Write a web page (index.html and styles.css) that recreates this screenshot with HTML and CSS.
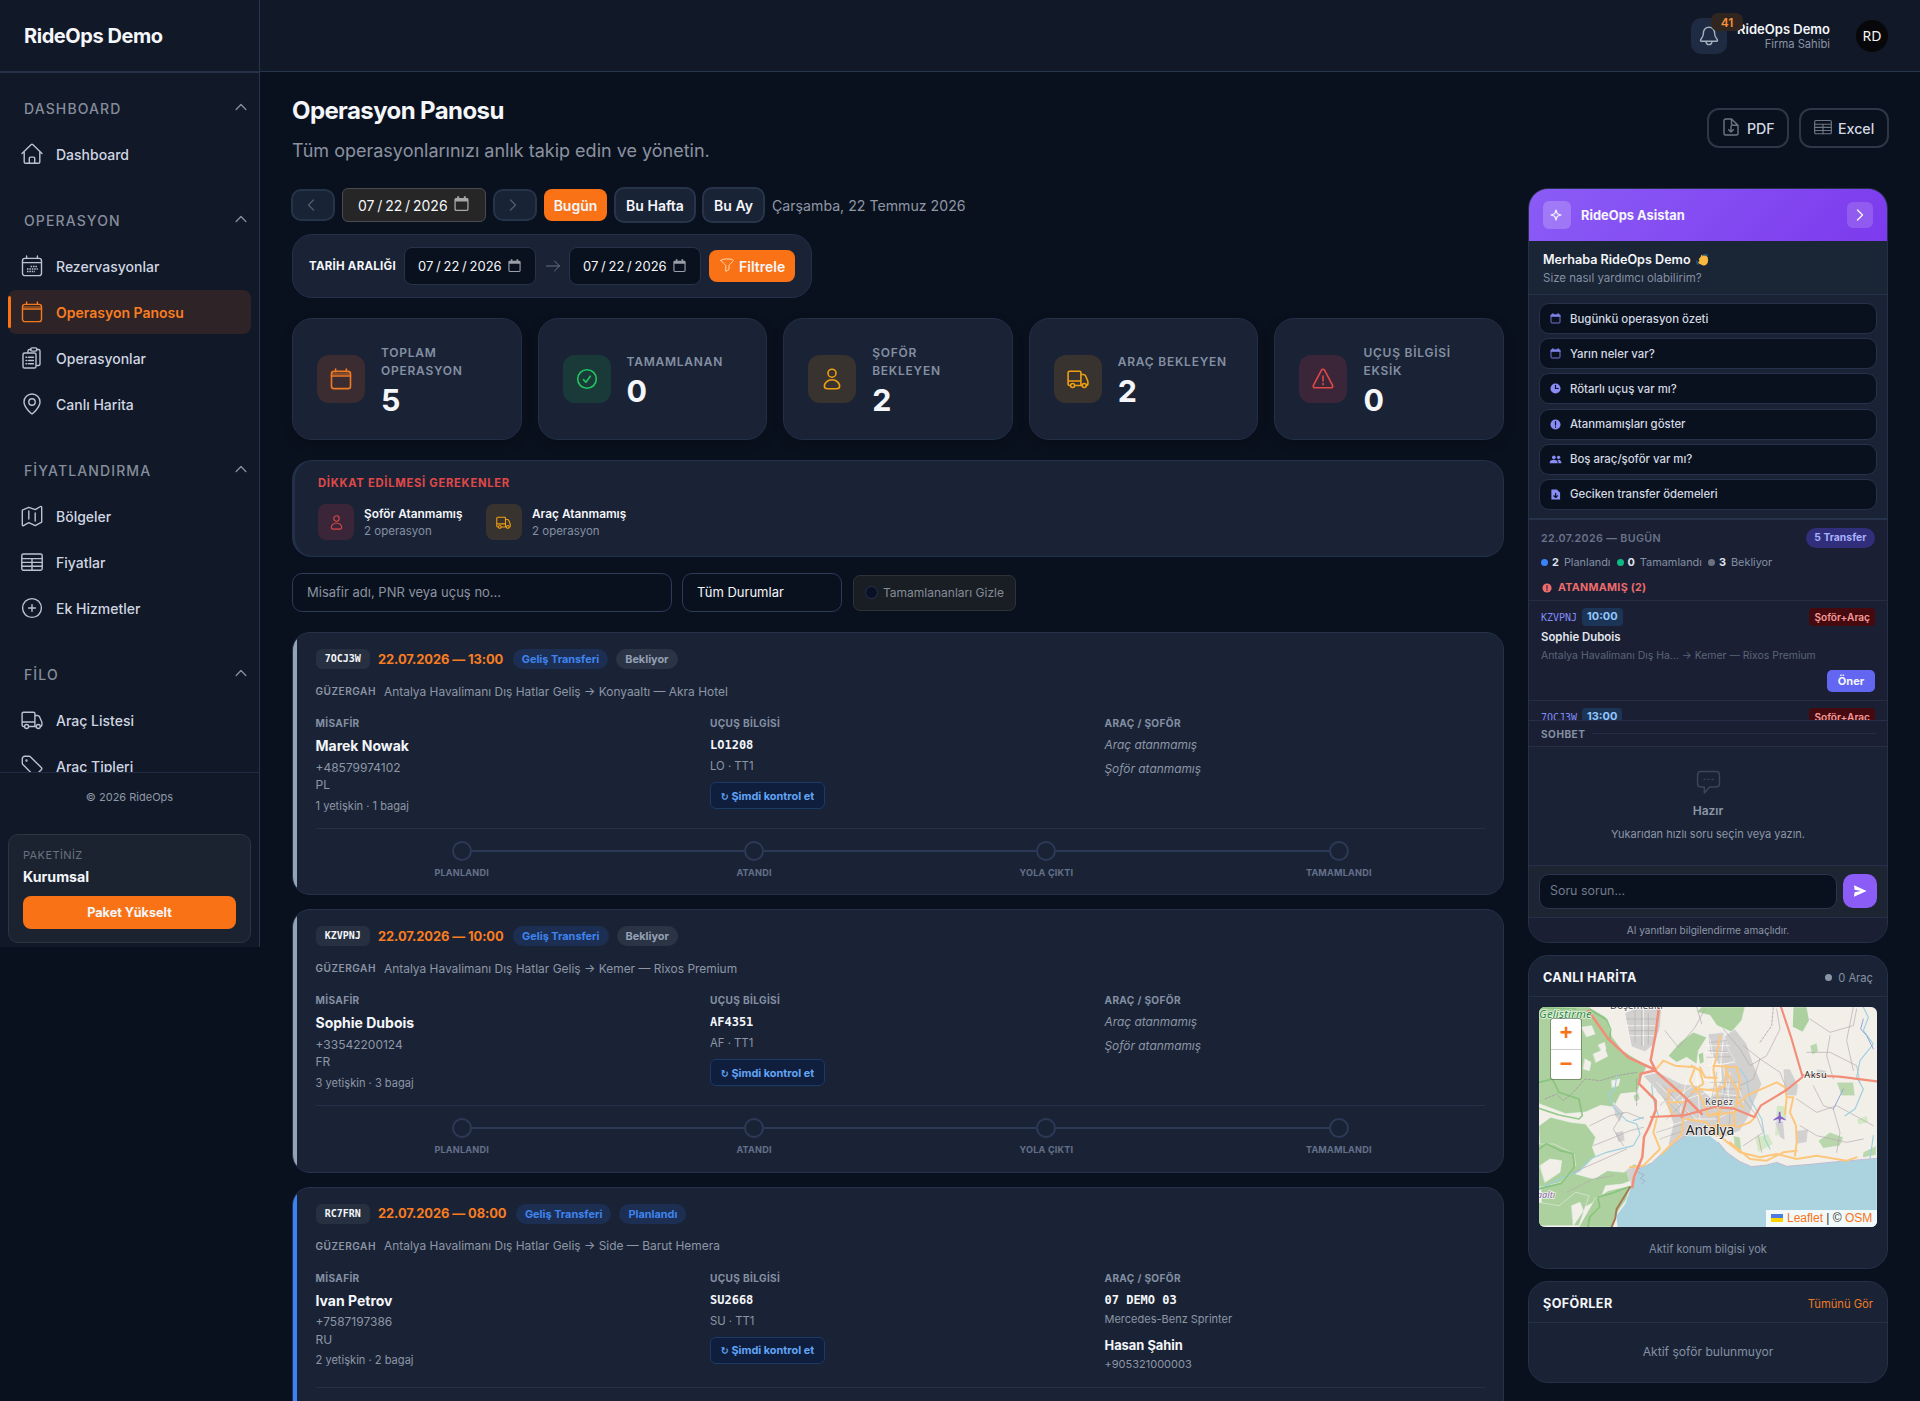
FILE: index.html
```html
<!DOCTYPE html>
<html lang="tr">
<head>
<meta charset="utf-8">
<title>RideOps Demo — Operasyon Panosu</title>
<link rel="stylesheet" href="styles.css">
</head>
<body>
<svg class="sprite" aria-hidden="true">
  <symbol id="i-home" viewBox="0 0 22 22"><path d="M1 10.5 10.3 1.6a1 1 0 0 1 1.4 0L21 10.5M3.2 8.5V19a1.3 1.3 0 0 0 1.3 1.3h13a1.3 1.3 0 0 0 1.3-1.3V8.5M8.3 20.3v-5.2a1 1 0 0 1 1-1h3.4a1 1 0 0 1 1 1v5.2"/></symbol>
  <symbol id="i-cal" viewBox="0 0 22 22"><rect x="1.5" y="3.400" width="19" height="17.200" rx="2.400"/><path d="M1.500 8h19M5.600 1v2.600M16.400 1v2.600"/><path d="M2 6h18" stroke-opacity=".55"/></symbol>
  <symbol id="i-caldots" viewBox="0 0 22 22"><rect x="1.5" y="3.4" width="19" height="17.200" rx="2.4"/><path d="M1.5 7.600h19M5.6 1v2.6M16.4 1v2.6"/><path d="M9.6 11.400h7.200M6 14h10.800M6 16.600h8" stroke-linecap="butt" stroke-width="1.500" stroke-dasharray="1.500 .9"/></symbol>
  <symbol id="i-clip" viewBox="0 0 22 22"><rect x="2" y="6" width="13" height="15" rx="1.6"/><path d="M7 5.500V4a1.500 1.500 0 0 1 1.500-1.500H10M15.500 2.500h2A1.500 1.500 0 0 1 19 4v13a1.500 1.500 0 0 1-1.500 1.500H15.500"/><rect x="9.600" y=".9" width="6.300" height="3.200" rx="1.400"/><path d="M5 10.200h.8M7.600 10.200h4.800M5 13.500h.8M7.600 13.500h4.800M5 16.800h.8M7.600 16.800h4.800"/></symbol>
  <symbol id="i-pin" viewBox="0 0 22 22"><path d="M11 21S3 14.800 3 9a8 8 0 0 1 16 0c0 5.800-8 12-8 12Z"/><circle cx="11" cy="9" r="3.200"/></symbol>
  <symbol id="i-map" viewBox="0 0 22 22"><path d="M7.800 2.300 14.200 4.600 19.500 1.500a.8.8 0 0 1 1.200.7V17.200L14.200 20.600 7.800 17.700 2.500 20.600a.8.8 0 0 1-1.200-.7V5.200L7.800 2.300ZM7.800 6v8M14.200 8v8"/></symbol>
  <symbol id="i-table" viewBox="0 0 22 22"><rect x=".8" y="3" width="20.400" height="16.200" rx="1.600"/><path d="M.8 7.600h20.400M.8 11.400h20.400M.8 15.300h20.400M11 7.600v11.600"/></symbol>
  <symbol id="i-plus" viewBox="0 0 22 22"><circle cx="11" cy="11" r="9.400"/><path d="M11 7.600v6.800M7.600 11h6.800"/></symbol>
  <symbol id="i-truck" viewBox="0 0 22 22"><path d="M3.400 17.500H2.500A1.400 1.400 0 0 1 1.100 16V4.600A1.400 1.400 0 0 1 2.500 3.200h10a1.400 1.400 0 0 1 1.400 1.400v12.900H7.800M1.100 13h12.800M13.900 6.500h2.400c1 0 1.700.3 2.200 1.200l1.900 4.300c.3.700.5 1.400.5 2.100v2a1.400 1.400 0 0 1-1.400 1.400M13.900 17.500h1.200"/><circle cx="5.600" cy="17.500" r="2"/><circle cx="17.300" cy="17.500" r="2"/></symbol>
  <symbol id="i-tag" viewBox="0 0 22 22"><path d="M1.300 8.200V3.800A2.500 2.500 0 0 1 3.800 1.300h4.400a2 2 0 0 1 1.400.6L20.300 12.600a1.500 1.500 0 0 1 0 2.100l-5.600 5.600a1.500 1.500 0 0 1-2.100 0L1.900 9.600a2 2 0 0 1-.6-1.400Z"/><circle cx="5.500" cy="5.500" r=".5"/></symbol>
  <symbol id="i-user" viewBox="0 0 22 22"><circle cx="11" cy="5.200" r="4"/><path d="M11 11.800c-4.600 0-7.600 3.200-7.600 6.400 0 1.700 1.300 2.500 3 2.500h9.200c1.700 0 3-.8 3-2.500 0-3.200-3-6.400-7.600-6.400Z"/></symbol>
  <symbol id="i-check" viewBox="0 0 22 22"><circle cx="11" cy="11" r="9.300"/><path d="m7.500 11.600 2.400 2.600 4.400-6"/></symbol>
  <symbol id="i-warn" viewBox="0 0 22 22"><path d="M9.500 2.200 1.400 17.300a1.700 1.700 0 0 0 1.500 2.500h16.200a1.700 1.700 0 0 0 1.500-2.500L12.500 2.200a1.700 1.700 0 0 0-3 0ZM11 8v5M11 15.500v1.200"/></symbol>
  <symbol id="i-bell" viewBox="0 0 20 20"><path d="M10 1.200c-3.600 0-5.600 2.600-5.600 6 0 5-2.900 5.300-2.900 7.300 0 .5.400.8 1 .8h15c.6 0 1-.3 1-.8 0-2-2.900-2.300-2.900-7.300 0-3.400-2-6-5.600-6ZM7 15.600c.2 1.900 1.300 3 3 3s2.800-1.100 3-3"/></symbol>
  <symbol id="i-up" viewBox="0 0 12 12"><path d="M1.200 8.400 6 3.600l4.800 4.800"/></symbol>
  <symbol id="i-left" viewBox="0 0 12 12"><path d="M8.500 1 3.500 6l5 5"/></symbol>
  <symbol id="i-right" viewBox="0 0 12 12"><path d="m3.500 1 5 5-5 5"/></symbol>
  <symbol id="i-arrow" viewBox="0 0 14 14"><path d="M.5 7h13M8.500 2l5 5-5 5"/></symbol>
  <symbol id="i-funnel" viewBox="0 0 14 14"><path d="M.8 2.400C.8.400 13.200.4 13.200 2.400c0 1-4.200 4.300-4.200 5.200v3.800l-3.200 2V7.600c0-.9-5-4.200-5-5.200Z"/></symbol>
  <symbol id="i-pdf" viewBox="0 0 18 18"><path d="M9.500 1H3.800a1.800 1.800 0 0 0-1.800 1.800v12.400A1.800 1.800 0 0 0 3.800 17h10.400a1.800 1.800 0 0 0 1.800-1.800V7.200L9.500 1Zm0 0v4.400c0 1.200.6 1.800 1.800 1.800H16M9 8v6M6.600 11.800 9 14.100l2.400-2.300"/></symbol>
  <symbol id="i-date" viewBox="0 0 14 14"><path d="M1 2.200h12v3H1zM3 .2h1.800v2H3zM9.200.2H11v2H9.200z" fill="currentColor" stroke="none"/><rect x="1" y="2.400" width="12" height="11" rx="1"/></symbol>
  <symbol id="i-chat" viewBox="0 0 24 24"><path d="M4.500 1.500h15a3 3 0 0 1 3 3v8.800a3 3 0 0 1-3 3h-6.500L8 22v-5.700H4.500a3 3 0 0 1-3-3V4.500a3 3 0 0 1 3-3ZM7.700 9h.8M11.600 9h.8M15.500 9h.8"/></symbol>
</svg>

<div class="app">
  <aside class="sidebar">
    <div class="brand">RideOps Demo</div>
    <nav class="nav">
      <div class="nav-label">DASHBOARD<svg><use href="#i-up"/></svg></div>
      <a class="nav-item"><svg><use href="#i-home"/></svg>Dashboard</a>
      <div class="nav-label">OPERASYON<svg><use href="#i-up"/></svg></div>
      <a class="nav-item"><svg><use href="#i-caldots"/></svg>Rezervasyonlar</a>
      <a class="nav-item active"><svg><use href="#i-cal"/></svg>Operasyon Panosu</a>
      <a class="nav-item"><svg><use href="#i-clip"/></svg>Operasyonlar</a>
      <a class="nav-item"><svg><use href="#i-pin"/></svg>Canlı Harita</a>
      <div class="nav-label">FİYATLANDIRMA<svg><use href="#i-up"/></svg></div>
      <a class="nav-item"><svg><use href="#i-map"/></svg>Bölgeler</a>
      <a class="nav-item"><svg><use href="#i-table"/></svg>Fiyatlar</a>
      <a class="nav-item"><svg><use href="#i-plus"/></svg>Ek Hizmetler</a>
      <div class="nav-label">FİLO<svg><use href="#i-up"/></svg></div>
      <a class="nav-item"><svg><use href="#i-truck"/></svg>Araç Listesi</a>
      <a class="nav-item"><svg><use href="#i-tag"/></svg>Araç Tipleri</a>
    </nav>
    <div class="copyright">© 2026 RideOps</div>
    <div class="plan">
      <span class="plan-label">PAKETİNİZ</span>
      <strong>Kurumsal</strong>
      <button class="plan-btn">Paket Yükselt</button>
    </div>
  </aside>

  <div class="page">
    <header class="topbar">
      <div class="bell"><svg><use href="#i-bell"/></svg><span class="bell-count">41</span></div>
      <div class="who"><strong>RideOps Demo</strong><span>Firma Sahibi</span></div>
      <div class="avatar">RD</div>
    </header>

    <div class="title-row">
      <div>
        <h1>Operasyon Panosu</h1>
        <p class="subtitle">Tüm operasyonlarınızı anlık takip edin ve yönetin.</p>
      </div>
      <div class="exports">
        <button class="export pdf"><svg><use href="#i-pdf"/></svg>PDF</button>
        <button class="export xls"><svg><use href="#i-table"/></svg>Excel</button>
      </div>
    </div>

    <div class="columns">
      <main class="board">
        <div class="toolbar">
          <button class="step"><svg><use href="#i-left"/></svg></button>
          <div class="date-main">07 / 22 / 2026<svg><use href="#i-date"/></svg></div>
          <button class="step"><svg><use href="#i-right"/></svg></button>
          <button class="today">Bugün</button>
          <button class="range week">Bu Hafta</button>
          <button class="range month">Bu Ay</button>
          <span class="long-date">Çarşamba, 22 Temmuz 2026</span>
        </div>

        <div class="filter">
          <b>TARİH ARALIĞI</b>
          <div class="date-in">07 / 22 / 2026<svg><use href="#i-date"/></svg></div>
          <svg class="to"><use href="#i-arrow"/></svg>
          <div class="date-in">07 / 22 / 2026<svg><use href="#i-date"/></svg></div>
          <button class="apply"><svg><use href="#i-funnel"/></svg>Filtrele</button>
        </div>

        <section class="stats">
          <div class="stat"><span class="tile orange"><svg><use href="#i-cal"/></svg></span><div><span class="stat-label">TOPLAM OPERASYON</span><strong>5</strong></div></div>
          <div class="stat"><span class="tile green"><svg><use href="#i-check"/></svg></span><div><span class="stat-label">TAMAMLANAN</span><strong>0</strong></div></div>
          <div class="stat"><span class="tile amber"><svg><use href="#i-user"/></svg></span><div><span class="stat-label">ŞOFÖR<br>BEKLEYEN</span><strong>2</strong></div></div>
          <div class="stat"><span class="tile amber"><svg><use href="#i-truck"/></svg></span><div><span class="stat-label">ARAÇ BEKLEYEN</span><strong>2</strong></div></div>
          <div class="stat"><span class="tile red"><svg><use href="#i-warn"/></svg></span><div><span class="stat-label">UÇUŞ BİLGİSİ<br>EKSİK</span><strong>0</strong></div></div>
        </section>

        <section class="alerts">
          <h2>DİKKAT EDİLMESİ GEREKENLER</h2>
          <div class="alert-row">
            <div class="alert"><span class="tile small red"><svg><use href="#i-user"/></svg></span><div><strong>Şoför Atanmamış</strong><span>2 operasyon</span></div></div>
            <div class="alert"><span class="tile small amber"><svg><use href="#i-truck"/></svg></span><div><strong>Araç Atanmamış</strong><span>2 operasyon</span></div></div>
          </div>
        </section>

        <div class="search-row">
          <div class="search">Misafir adı, PNR veya uçuş no...</div>
          <div class="select">Tüm Durumlar</div>
          <div class="hide-done"><i></i>Tamamlananları Gizle</div>
        </div>

        <article class="op">
          <div class="op-head"><code>7OCJ3W</code><span class="when">22.07.2026 — 13:00</span><span class="pill blue">Geliş Transferi</span><span class="pill grey">Bekliyor</span></div>
          <div class="route"><b>GÜZERGAH</b>Antalya Havalimanı Dış Hatlar Geliş → Konyaaltı — Akra Hotel</div>
          <div class="op-cols">
            <div><h3>MİSAFİR</h3><p class="name">Marek Nowak</p><p class="phone">+48579974102</p><p class="phone">PL</p><p class="pax">1 yetişkin · 1 bagaj</p></div>
            <div><h3>UÇUŞ BİLGİSİ</h3><p class="code">LO1208</p><p class="term">LO · TT1</p><button class="recheck"><span>↻</span> Şimdi kontrol et</button></div>
            <div><h3>ARAÇ / ŞOFÖR</h3><p class="none">Araç atanmamış</p><p class="none">Şoför atanmamış</p></div>
          </div>
          <ol class="steps"><li>PLANLANDI</li><li>ATANDI</li><li>YOLA ÇIKTI</li><li>TAMAMLANDI</li></ol>
        </article>

        <article class="op">
          <div class="op-head"><code>KZVPNJ</code><span class="when">22.07.2026 — 10:00</span><span class="pill blue">Geliş Transferi</span><span class="pill grey">Bekliyor</span></div>
          <div class="route"><b>GÜZERGAH</b>Antalya Havalimanı Dış Hatlar Geliş → Kemer — Rixos Premium</div>
          <div class="op-cols">
            <div><h3>MİSAFİR</h3><p class="name">Sophie Dubois</p><p class="phone">+33542200124</p><p class="phone">FR</p><p class="pax">3 yetişkin · 3 bagaj</p></div>
            <div><h3>UÇUŞ BİLGİSİ</h3><p class="code">AF4351</p><p class="term">AF · TT1</p><button class="recheck"><span>↻</span> Şimdi kontrol et</button></div>
            <div><h3>ARAÇ / ŞOFÖR</h3><p class="none">Araç atanmamış</p><p class="none">Şoför atanmamış</p></div>
          </div>
          <ol class="steps"><li>PLANLANDI</li><li>ATANDI</li><li>YOLA ÇIKTI</li><li>TAMAMLANDI</li></ol>
        </article>

        <article class="op planned">
          <div class="op-head"><code>RC7FRN</code><span class="when">22.07.2026 — 08:00</span><span class="pill blue">Geliş Transferi</span><span class="pill blue">Planlandı</span></div>
          <div class="route"><b>GÜZERGAH</b>Antalya Havalimanı Dış Hatlar Geliş → Side — Barut Hemera</div>
          <div class="op-cols">
            <div><h3>MİSAFİR</h3><p class="name">Ivan Petrov</p><p class="phone">+7587197386</p><p class="phone">RU</p><p class="pax">2 yetişkin · 2 bagaj</p></div>
            <div><h3>UÇUŞ BİLGİSİ</h3><p class="code">SU2668</p><p class="term">SU · TT1</p><button class="recheck"><span>↻</span> Şimdi kontrol et</button></div>
            <div><h3>ARAÇ / ŞOFÖR</h3><p class="code">07 DEMO 03</p><p class="model">Mercedes-Benz Sprinter</p><p class="driver">Hasan Şahin</p><p class="driver-tel">+905321000003</p></div>
          </div>
        </article>
      </main>

      <aside class="side">
        <section class="panel assistant">
          <div class="as-head"><span class="as-logo"><svg viewBox="0 0 12 12"><path d="M6 1 7.300 4.700 11 6 7.300 7.300 6 11 4.700 7.300 1 6 4.700 4.700Z"/></svg></span><strong>RideOps Asistan</strong><span class="as-close"><svg><use href="#i-right"/></svg></span></div>
          <div class="hello"><strong>Merhaba RideOps Demo <svg class="wave" viewBox="0 0 14 14"><path fill="#fbb83f" d="M3.200 5.200 5 3.200l.6-1.800c.3-.8 1.500-.6 1.500.4l-.1 1 1-1.200c.7-.8 1.800 0 1.400.9l1-.8c.9-.5 1.700.4 1.100 1.300l.4-.1c.9 0 1.200.9.7 1.600.6 1 .6 3.300-.2 5.200-1 2.300-3.200 3.300-5.300 2.300L3 10.200C1.700 9.300 2.300 8 3.600 8.200Z"/><path d="M1 7.500c-.4 1.300 0 2.600 1 3.600M8.500.5c1.500-.3 2.800.3 3.700 1.300" fill="none" stroke="#1c5f8c"/></svg></strong><span>Size nasıl yardımcı olabilirim?</span></div>
          <div class="quick">
            <button><svg viewBox="0 0 12 12"><path d="M.6 2.600A1 1 0 0 1 1.600 1.600h8.800a1 1 0 0 1 1 1V4.200H.6zM2.500.4h1.300v1.400H2.500zM8.200.4h1.300v1.400H8.200z"/><rect class="line" x="1.100" y="2.300" width="9.800" height="8.600" rx="1"/></svg>Bugünkü operasyon özeti</button>
            <button><svg viewBox="0 0 12 12"><path d="M.6 2.600A1 1 0 0 1 1.600 1.600h8.800a1 1 0 0 1 1 1V4.200H.6zM2.500.4h1.300v1.400H2.500zM8.200.4h1.300v1.400H8.200z"/><rect class="line" x="1.100" y="2.300" width="9.800" height="8.600" rx="1"/></svg>Yarın neler var?</button>
            <button><svg viewBox="0 0 12 12"><circle cx="6" cy="6" r="5.500"/><path class="cut" d="M6 2.500V6h3"/></svg>Rötarlı uçuş var mı?</button>
            <button><svg viewBox="0 0 12 12"><circle cx="6" cy="6" r="5.500"/><path class="cut" d="M6 2.800V6.600M6 8.600v.5"/></svg>Atanmamışları göster</button>
            <button><svg class="wide" viewBox="0 0 14 12"><circle cx="5.200" cy="3.600" r="2"/><circle cx="10.400" cy="3.600" r="1.800"/><path d="M.6 10c0-2.600 2-3.700 4.500-3.700S9.400 7.400 9.400 10zM10.200 10c.1-1.500-.3-2.600-1.200-3.400 2.400-.8 4.500.6 4.500 3.400z"/></svg>Boş araç/şoför var mı?</button>
            <button><svg viewBox="0 0 12 12"><path d="M1.500.5h6L11 4v7.500H1.500z"/><path class="cut" d="M6.200 4.800v4.400M4.200 7.400l2 1.800 2-1.800"/></svg>Geciken transfer ödemeleri</button>
          </div>
          <div class="today-box">
            <div class="tb-head"><span>22.07.2026 — BUGÜN</span><em>5 Transfer</em></div>
            <div class="counts"><i class="dot c-blue"></i><b>2</b>Planlandı<i class="dot c-green"></i><b>0</b>Tamamlandı<i class="dot c-grey"></i><b>3</b>Bekliyor</div>
            <div class="unassigned"><svg viewBox="0 0 12 12"><circle cx="6" cy="6" r="5.500"/><path d="M6 3v3.600M6 8.200v.8" stroke="#1a1f34" stroke-width="1.300"/></svg>ATANMAMIŞ (2)</div>
            <div class="todo"><div class="todo-top"><code>KZVPNJ</code><span class="time">10:00</span><span class="need">Şoför+Araç</span></div><strong>Sophie Dubois</strong><p>Antalya Havalimanı Dış Ha... → Kemer — Rixos Premium</p><button>Öner</button></div>
            <div class="todo"><div class="todo-top"><code>7OCJ3W</code><span class="time">13:00</span><span class="need">Şoför+Araç</span></div></div>
          </div>
          <div class="chat-label">SOHBET</div>
          <div class="chat"><svg><use href="#i-chat"/></svg><strong>Hazır</strong><span>Yukarıdan hızlı soru seçin veya yazın.</span></div>
          <div class="ask"><div class="ask-in">Soru sorun...</div><button class="send"><svg viewBox="0 0 14 14"><path d="M1 1.200 13.600 7 1 12.800l.6-4.600L8 7 1.600 5.800z"/></svg></button></div>
          <div class="note">AI yanıtları bilgilendirme amaçlıdır.</div>
        </section>

        <section class="panel live">
          <div class="panel-head"><h2>CANLI HARİTA</h2><span class="online"><i></i>0 Araç</span></div>
          <div class="map">
            <svg viewBox="87 204 1014 660" preserveAspectRatio="none">
              <rect x="87" y="204" width="1014" height="660" fill="#f2efe9"/>
              <g fill="#add19e">
                <path d="M87 204h150l50 30 20 60 30 40 40 25 35 20-15 30-15 50-50 5-20 40-40-5-45 20-60 5-80-30z"/>
                <path d="M87 560l35-25 60 15 45 5 30 40-10 30 10 25-30 30-30 25 55 15 40-25 50 5 30-25 20 10-15 35-40 15-50 5-15 40-60 30-45 35-70 20z"/>
                <path d="M87 615l45 0 60 30 5 35-45 50-65 15zM255 780l40-25 65-15-10 40-35 50-8 34h-100zM87 790l60 10 50-40 40 10-30 90h-120z"/>
                <path d="M575 204h130l-10 40-30 35-45-20-20-30-40-10zM850 204h40l8 40-20 35-30-15zM475 350l35-40 40-30 40 15-25 40-5 40-30-20-30 15zM565 345l15-5 2 30-12 5z"/>
                <path d="M370 470l15-10 5 20-15 8zM480 450l25 0 5 25-25 10zM980 430l50 0 5 40-40 0zM900 320l20-8 5 25-18 10zM670 590l20 5 5 40-20-10zM1060 640l38-20v28l-40 8zM925 605l35-25 40 15-10 25-50 8z" opacity=".8"/>
              </g>
              <g fill="#c8e6b4" opacity=".7"><path d="M800 500h30v40h-15v50h-20zM735 595l40-10 15 30-45 25zM1040 540l30-10 5 20-30 8zM700 480h22l5 30-25 5z"/></g>
              <g fill="#f2efe9"><path d="M250 345l35-15 8 22-35 18zM265 318l18-8 5 20-12 8zM225 360l18 10-5 25-18-5zM90 680l30-20 35 5-5 35-45 30zM185 800l25-10 10 25-30 45zM215 265l30-5 10 25-25 8zM305 425l25-5-5 20-18 5z"/></g>
              <g fill="#d3d1cf">
                <path d="M345 222l30-14h80l-5 55-15 50-30 25-40-15zM400 410l45-10 70 35 50 5 40 40 30-60-5-60 15-70 30-20 35 45 20 60 25 60-25 60-10 30-30 50-50 20-40-5-60 20-40 45-25-40 15-60-15-45-20-40zM595 285l45-5 15 50 20 35-45 15-30-40zM820 390h20l25 50-5 30-35 0zM795 550l25-5 5 60-15-10zM860 575l35-5-5 40-30 5zM350 690l40-10 15 25-15 35-25 5z"/>
                <path d="M310 490l30 30-10 30-15-20zM315 580l25-5 5 30-20 5zM920 390l30 5-5 15-25-2z"/>
              </g>
              <g fill="none" stroke="#fff" stroke-width="2.500" opacity=".75">
                <path d="M440 430l60 60 60 50M450 520l70-60 60-40 60 20M600 300l10 60-10 80M640 290l-10 120 15 80M585 340h70M590 320h70M595 380l80-10M660 400l-5 60M680 430l20 60M430 480l70 10 90-30 90 10M480 560l60-20 80 0 60-30M350 260h90M360 290h80M400 210v110M640 380l20 120M530 420l-20 100M560 400l10 140"/>
              </g>
              <g fill="none" stroke="#b5a9ad" stroke-width="2">
                <path d="M465 275l40 50 50-60 30-55M640 270l50 60 30 50 50-30 40-80-10-60M700 320l50 40-20 60-40 20M750 360l60 40 20 50M900 240l60 40 70-20 10-50M890 340l70 0 80 40 10 50M960 290l-10 60 20 70M910 440l30 60 30 10 20 70-10 60M860 480l60 40 60-20 110 60M700 480l40 50 20 50-60 40M745 590l10 50M870 560l50 30 90 20 50-10M250 620l50-20 60-25 40-10M240 560l60-30 50-10 50 20M190 700l70-30 90-40M170 760l80-40 60-10M340 520l-30 50 30 50M1030 204l-20 100 20 90M560 204l15 50"/>
                <path d="M600 310l50-5M595 335l55 3M590 355l70-2M440 455l80 80M460 440l90 100M480 430l90 90M450 500l60-60M470 540l80-80M620 400l-20 110M650 400l-15 110M600 430h90M600 450h95M595 475h100M660 520l-5 70M620 530l10 60M440 580l80-25M450 600l70-25M375 215v95M395 215v105M415 225v90M350 240h95M360 275h85" stroke="#aaa6a8" stroke-width="1.500"/>
                <path d="M105 480l35-15 20 20 30-25 35-40 45 5 50-15 60-10M380 420v80M750 310l35-50 5-55" stroke-dasharray="7 5" stroke="#a08b9c"/>
              </g>
              <g fill="none" stroke="#9ccfe0" stroke-width="3.500">
                <path d="M320 410l-5 40-20 15 15 40 40 40 30 10 10 30-20 35-80 20-50 20-30 35-60 25-70 35M425 440l5 40 15 50M690 390l20 30 10 60 35 60 10 60 15 30M1060 205l15 30-15 40 30 40-40 50-10 50 20 35-25 60-30 20M1090 590l-10 70M370 545l30-10"/>
              </g>
              <path d="M1060 240l-8 30 18 20 20 40M1000 450l-30 60" fill="none" stroke="#91a5da" stroke-width="3"/>
              <path fill="#aad3df" d="M322 864l-4-34 27-35 17-50 23-55 40-18 45-42 57-40 33 2 40-2 25 20 25 30 40 28 35 15 45-5 30-8 30 12 70-6 80-8 121-10v206z"/>
              <path fill="none" stroke="#a99bbd" stroke-width="2" stroke-dasharray="5 3" d="M385 690l40-18 45-42 57-40M625 610l25 30 40 28 35 15 45-5 30-8 30 12 70-6 80-8 121-10M385 700l18 8-12 10 14 8-10 8"/>
              <g fill="none" stroke="#7fbf74" stroke-width="5" opacity=".8">
                <path d="M87 206l110 4M240 212l50 30 12 30-3 28M87 430l40-10 20 40 60 20 10 50-10 10-60-12-60-20M87 630l22-16 40 20 40 10 4 40-40 50-66 15M362 742l-60 22-38 10 5 30-30 30-5 30"/>
              </g>
              <g fill="none" stroke="#fcc77d" stroke-width="6" stroke-linejoin="round">
                <path d="M435 395l25-30 35 15 60 5-15 40 15 25 25-15-10-40-25-15M570 385l15 30 35 2M630 290l-10 60-10 40 10 60 10 60-5 50M610 380l70 5 10 40-10 60 20 20M650 380l-5 60-25 15-50-5-25 10M560 450l20 40 15 40 30-10M690 490l20-20 90-40 25 15 5 30-5 50M830 475l20 0-10 45 18 40 2 50-5 40M475 450l0 50 15 30M475 455l40 0M480 490h40M440 540l-10 40 20 50-50 50-40 5M520 535l-5 50-60 60M530 540l60 10 30 40M595 530l75-10 5 40-60 0M610 560l30 40 50 40 60 15 50-10 60 15 60-10 90 15 30-10M660 610l60 50 50 5 50-25 40-5M680 565l40-15 15-15M650 400l35 60-10 60"/>
              </g>
              <g fill="none" stroke="#f28d78" stroke-width="8" stroke-linejoin="round">
                <path d="M235 215l60 85 60 55 75 35 90 80 55 55M447 204l-10 80-15 80 15 30-45 10-5 30 50 50 0 30-20 50-15 30-5 60-25 60-5 30" stroke-width="7.500"/>
                <path d="M813 204l30 90 35 120-50 40-75 45-20 35-60-25-60-5-90 25-100 5M878 408l110 5 113 14M530 480l-15 55" stroke-width="6.500"/>
                <path d="M360 745l-40 65-5 30-10 24" stroke="#a67b52" stroke-width="6"/>
              </g>
              <path fill="#8461c4" d="M809 517c4 0 4 5 4 14l15 10v4l-15-4-1 8 5 5-8-2-8 2 5-5-1-8-15 4v-4l15-10c0-9 0-14 4-14z"/>
              <g class="map-text">
                <text x="87" y="236" font-size="34" font-style="italic" fill="#2b8a3e" textLength="158">Geliştirme</text>
                <text x="300" y="210" font-size="29" fill="#444" textLength="158">Döşemealtı</text>
                <text x="883" y="416" font-size="28" fill="#222" textLength="67">Aksu</text>
                <text x="585" y="498" font-size="27" fill="#333" textLength="84">Kepez</text>
                <text x="527" y="588" font-size="41" fill="#222" textLength="146" lengthAdjust="spacingAndGlyphs">Antalya</text>
                <text x="80" y="777" font-size="28" font-style="italic" fill="#8a6aa5">aaltı</text>
              </g>
            </svg>
            <div class="zoomer"><span>+</span><span>−</span></div>
            <div class="credit"><svg viewBox="0 0 12 8"><path fill="#4c7be1" d="M0 0h12v4H0z"/><path fill="#ffd500" d="M0 4h12v4H0z"/></svg><a>Leaflet</a> | © <a>OSM</a></div>
          </div>
          <p class="map-note">Aktif konum bilgisi yok</p>
        </section>

        <section class="panel drivers">
          <div class="panel-head"><h2>ŞOFÖRLER</h2><a>Tümünü Gör</a></div>
          <p>Aktif şoför bulunmuyor</p>
        </section>
      </aside>
    </div>
  </div>
</div>
</body>
</html>
```
FILE: styles.css
```css
*, *::before, *::after { box-sizing: border-box; margin: 0; padding: 0; }
html, body { height: 1401px; overflow: hidden; }
body {
  background: #0a111e;
  color: #f4f6fa;
  font-family: Inter, "Liberation Sans", sans-serif;
  font-size: 14px;
}
button { font: inherit; color: inherit; border: 0; background: none; }
svg { fill: none; stroke: currentColor; stroke-width: 1.4; stroke-linecap: round; stroke-linejoin: round; flex: none; }
code, .code { font-family: "DejaVu Sans Mono", "Liberation Mono", monospace; }
.sprite { position: absolute; width: 0; height: 0; }

.app { display: flex; height: 1401px; align-items: flex-start; overflow: hidden; }

/* sidebar */
.sidebar { width: 260px; height: 947px; flex: none; background: #111827; border-right: 1px solid #26344d; display: flex; flex-direction: column; }
.brand { height: 73px; padding: 1px 0 0 24px; display: flex; align-items: center; border-bottom: 2px solid #243147; font-size: 20px; font-weight: 700; letter-spacing: -.45px; flex: none; }
.nav { flex: none; height: 700px; overflow: hidden; padding: 11px 8px 0; border-bottom: 1px solid #1f2b40; }
.nav-label { height: 48px; padding: 0 4px 0 16px; display: flex; align-items: center; justify-content: space-between; font-size: 14px; font-weight: 500; letter-spacing: 1.12px; color: #858d9c; }
.nav-item + .nav-label { margin-top: 20px; }
.nav-label svg { width: 12px; height: 12px; margin-top: -3px; }
.nav-item { height: 44px; margin-bottom: 2px; padding-left: 13px; display: flex; align-items: center; gap: 13px; border-radius: 8px; font-size: 14px; font-weight: 500; color: #cfd6e1; position: relative; }
.nav-item svg { width: 22px; height: 22px; color: #bac3d1; margin-top: -1px; }
.nav-item.active { background: #2e2427; color: #f97d20; font-weight: 600; }
.nav-item.active svg { color: #f37a20; }
.nav-item.active::before { content: ""; position: absolute; left: 0; top: 6px; bottom: 6px; width: 3px; border-radius: 2px; background: #f97316; }
.copyright { height: 60.500px; padding-top: 16px; text-align: center; font-size: 11px; line-height: 17px; color: #8e98a8; }
.plan { margin: 0 8px; height: 109px; padding: 12px 14px; border: 1px solid #2b3642; border-radius: 10px; background: #1a232f; display: flex; flex-direction: column; }
.plan-label { font-size: 11px; line-height: 16px; letter-spacing: .4px; color: #69727f; }
.plan strong { font-size: 14.200px; line-height: 20px; margin: 4px 0 9.500px; }
.plan-btn { height: 33px; border-radius: 8px; background: #f97316; font-size: 12.700px; font-weight: 700; }

/* top bar */
.page { flex: 1; min-width: 0; }
.topbar { height: 72px; background: #111827; border-bottom: 1px solid #26344d; display: flex; align-items: center; justify-content: flex-end; padding-right: 32px; }
.bell { width: 36px; height: 36px; border-radius: 10px; background: #1e2b42; display: flex; align-items: center; justify-content: center; position: relative; color: #a5afbf; }
.bell svg { width: 20px; height: 20px; }
.bell-count { position: absolute; left: 20px; top: -5px; width: 32px; height: 18px; border-radius: 7px; background: #30261f; color: #f5913c; font-size: 12px; font-weight: 600; line-height: 19px; text-align: center; }
.who { display: flex; flex-direction: column; align-items: flex-end; margin-left: 10px; padding-top: 1px; }
.who strong { font-size: 13px; line-height: 15px; font-weight: 600; }
.who span { font-size: 11.200px; line-height: 14px; color: #8993a4; }
.avatar { width: 32px; height: 32px; border-radius: 50%; background: #08080a; margin-left: 26px; font-family: "Noto Sans", sans-serif; font-size: 14px; line-height: 32px; text-align: center; }

/* page title */
.title-row { display: flex; justify-content: space-between; padding: 22px 31px 0 32px; height: 116px; }
h1 { font-size: 24px; line-height: 34px; letter-spacing: -.6px; font-weight: 700; }
.subtitle { margin-top: 10px; font-size: 18px; line-height: 26px; color: #8a92a0; }
.exports { display: flex; gap: 10px; padding-top: 14px; }
.export { height: 40px; border: 2px solid #2e3747; border-radius: 12px; display: flex; align-items: center; gap: 7px; font-size: 14.200px; font-weight: 500; color: #d3d9e3; }
.export svg { width: 18px; height: 18px; color: #6d7684; margin-top: -2px; }
.pdf { width: 82px; padding-left: 13px; }
.xls { width: 90px; padding-left: 13px; gap: 6px; }

/* layout columns */
.columns { display: flex; gap: 24px; padding: 0 32px; }
.board { width: 1212px; flex: none; }
.side { width: 360px; flex: none; display: flex; flex-direction: column; }

/* toolbar */
.toolbar { display: flex; align-items: center; gap: 7px; height: 34px; margin-left: -1px; }
.step { width: 44px; height: 32px; border: 2px solid #26344a; border-radius: 10px; background: #182336; display: flex; align-items: center; padding-left: 12px; color: #4f5b6f; }
.step svg { width: 12px; height: 12px; }
.date-main { width: 144px; height: 34px; border: 1px solid #4c4c50; border-radius: 6px; background: #262627; display: flex; align-items: center; padding-left: 15px; gap: 6px; font-size: 14px; word-spacing: -1.100px; }
.date-main svg { width: 15px; height: 15px; color: #a8a8a8; margin-top: -3px; stroke-width: 1.2; }
.today { height: 32px; width: 63px; border-radius: 8px; background: #f97316; font-size: 14px; font-weight: 600; }
.range { height: 36px; border: 2px solid #27344a; border-radius: 10px; background: #182336; font-size: 14px; font-weight: 600; }
.week { width: 82px; }
.month { width: 63px; margin-left: -1px; }
.long-date { font-size: 14.150px; color: #8f97a5; }

/* date range filter */
.filter { width: 520px; height: 64px; margin-top: 12px; border: 1px solid #22304a; border-radius: 20px; background: #1a2335; display: flex; align-items: center; padding: 0 16px; }
.filter b { font-size: 11.500px; font-weight: 700; letter-spacing: .25px; width: 87px; margin-right: 8px; white-space: nowrap; }
.date-in { width: 132px; height: 38px; border: 1px solid #26334a; border-radius: 8px; background: #0a111e; display: flex; align-items: center; gap: 6px; padding-left: 13px; font-size: 13px; word-spacing: -.9px; }
.date-in svg { width: 13px; height: 13px; color: #9a9fa8; margin-top: -2px; stroke-width: 1.2; }
.to { width: 14px; height: 14px; margin: 0 9.500px; color: #64708a; stroke-width: 1; }
.apply { width: 86px; height: 32px; margin-left: 8px; border-radius: 8px; background: #f97316; display: flex; align-items: center; gap: 5px; padding-left: 11px; font-size: 14px; font-weight: 600; }
.apply svg { width: 14px; height: 14px; stroke-width: 1; color: #ffd9b8; margin-top: -2px; }

/* stat cards */
.stats { display: grid; grid-template-columns: repeat(5, 1fr); gap: 16px; margin-top: 20px; }
.stat { height: 122px; border: 1px solid #212f47; border-radius: 20px; background: #1a2335; display: flex; align-items: center; gap: 16px; padding-left: 24px; box-shadow: 0 4px 12px rgba(0, 0, 0, .2); }
.stat > div { display: flex; flex-direction: column; padding-top: 3px; }
.stat-label { width: 125px; font-size: 12px; line-height: 18px; font-weight: 600; letter-spacing: .75px; color: #8490a3; }
.stat strong { font-size: 30.400px; line-height: 36px; font-weight: 700; margin-top: 2px; }
.tile { width: 48px; height: 48px; border-radius: 12px; display: flex; align-items: center; justify-content: center; flex: none; }
.tile svg { width: 22px; height: 22px; stroke-width: 1.6; }
.tile.small { width: 36px; height: 36px; border-radius: 8px; }
.tile.small svg { width: 15px; height: 15px; }
.orange { background: #3a2c30; color: #ee7a24; }
.green { background: #1a3a3a; color: #22c55e; }
.amber { background: #39332f; color: #ee9f14; }
.red { background: #3a2638; color: #e04848; }

/* attention box */
.alerts { height: 97px; margin-top: 20px; border: 1px solid #22304a; border-left: 3px solid #22304a; border-radius: 20px; background: #1a2335; padding: 14px 23px; }
.alerts h2 { font-size: 11.200px; line-height: 16px; font-weight: 700; letter-spacing: .74px; color: #e04848; }
.alert-row { display: flex; gap: 23.500px; margin-top: 13px; }
.alert { display: flex; align-items: center; gap: 10px; }
.alert div { display: flex; flex-direction: column; }
.alert strong { font-size: 11.850px; line-height: 18px; font-weight: 600; }
.alert div span { font-size: 11.500px; line-height: 17px; color: #8490a3; }

/* search */
.search-row { display: flex; align-items: center; margin-top: 16px; height: 39px; }
.search, .select { height: 39px; border: 1px solid #2b3b58; border-radius: 10px; background: #0a111e; line-height: 37px; padding-left: 14px; font-size: 13px; }
.search { width: 380px; font-size: 13px; color: #8b93a1; }
.select { width: 160px; margin: 0 11px 0 10px; }
.hide-done { width: 163px; height: 36px; border: 1px solid #2e3237; border-radius: 7px; background: #191d24; display: flex; align-items: center; gap: 5px; padding-left: 11px; font-size: 12px; color: #858c98; }
.hide-done i { width: 13px; height: 13px; border: 1px solid #263452; border-radius: 50%; background: #0a1124; }

/* operation cards */
.op { position: relative; margin-top: 14px; border: 1px solid #243149; border-radius: 18px; background: #1a2335; padding: 16px 18px 14px 22.500px; overflow: hidden; height: 263.300px; }
.search-row + .op { margin-top: 20px; }
.op::before { content: ""; position: absolute; left: 0; top: 0; bottom: 0; width: 4px; background: #94a3b8; }
.op.planned { height: 268px; }
.op.planned::before { background: #3b82f6; }
.op-head { display: flex; align-items: center; gap: 8px; height: 20px; }
.op-head code { width: 54.500px; height: 20px; border-radius: 6px; background: #263040; font-size: 10px; font-weight: 700; line-height: 20px; text-align: center; }
.when { font-size: 12.900px; font-weight: 700; letter-spacing: -.08px; color: #f97d20; white-space: nowrap; margin-right: 1.500px; }
.pill { height: 20px; border-radius: 10px; padding: 0 9px; font-size: 10.900px; font-weight: 700; line-height: 20px; }
.pill.blue { background: #1c2f52; color: #3f83ee; }
.pill.grey { background: #2a3445; color: #94a0b3; }
.route { display: flex; align-items: center; gap: 8px; height: 20px; margin-top: 12px; font-size: 11.950px; color: #8c96a6; }
.route b { font-size: 10.100px; font-weight: 600; letter-spacing: .5px; }
.op-cols { display: grid; grid-template-columns: repeat(3, 378.500px); column-gap: 16px; margin-top: 15px; height: 113px; border-bottom: 1px solid #233048; color: #8c96a6; }
.planned .op-cols { height: 117px; }
h3 { font-size: 10.100px; line-height: 14px; font-weight: 700; letter-spacing: .35px; color: #8490a3; }
.name { margin-top: 6px; font-size: 14px; line-height: 20px; font-weight: 700; color: #f4f6fa; }
.phone { font-size: 12px; line-height: 17.600px; }
.name + .phone { margin-top: 2.500px; }
.pax { margin-top: 4px; font-size: 11.100px; line-height: 17px; }
.code { margin-top: 7px; font-size: 12px; line-height: 16px; font-weight: 700; color: #f4f6fa; }
.term { margin-top: 5px; font-size: 11.300px; line-height: 17px; }
.recheck { display: block; margin-top: 7px; width: 115px; height: 27px; border: 1px solid #1c3a68; border-radius: 6px; background: #0e1e3c; color: #62a4f5; font-size: 10.900px; font-weight: 700; white-space: nowrap; }
.recheck span { font-family: "DejaVu Sans", sans-serif; font-size: 9.500px; }
.none { margin-top: 5px; font-size: 11.900px; line-height: 19px; font-style: italic; }
.model, .driver-tel { font-size: 11px; line-height: 17px; }
.model { margin-top: 3px; }
.driver { margin-top: 8px; font-size: 12.900px; line-height: 19px; font-weight: 700; color: #f4f6fa; }
.driver-tel { margin-top: 1px; }
.steps { display: flex; list-style: none; padding-top: 12px; }
.steps li { flex: 1; display: flex; flex-direction: column; align-items: center; position: relative; font-size: 9.100px; line-height: 12px; font-weight: 700; letter-spacing: .2px; color: #64708a; }
.steps li::before { content: ""; width: 20px; height: 20px; border: 2px solid #2c3a57; border-radius: 50%; margin-bottom: 6px; }
.steps li + li::after { content: ""; position: absolute; top: 9px; right: calc(50% + 10px); width: calc(100% - 20px); height: 2px; background: #2c3a57; }

/* right column panels */
.panel { border: 1px solid #243149; border-radius: 20px; background: #1a2335; overflow: hidden; }
.assistant { height: 755px; display: flex; flex-direction: column; }
.as-head { height: 52px; flex: none; background: linear-gradient(135deg, #8b5cf6, #7c3aed); display: flex; align-items: center; padding: 0 14px; }
.as-logo { width: 28px; height: 28px; border-radius: 6px; background: rgba(255, 255, 255, .2); display: flex; align-items: center; padding-left: 7px; margin-right: 10px; }
.as-logo svg { width: 12px; height: 12px; stroke-width: 1.2; }
.as-head strong { font-size: 12.900px; font-weight: 700; flex: 1; }
.as-close { width: 26px; height: 26px; border-radius: 6px; background: rgba(255, 255, 255, .15); display: flex; align-items: center; justify-content: center; }
.as-close svg { width: 12px; height: 12px; }
.hello { height: 54px; flex: none; padding: 9px 14px 0; border-bottom: 1px solid #243147; background: #1a2536; display: flex; flex-direction: column; }
.hello strong { font-size: 12.600px; line-height: 20px; font-weight: 600; display: flex; align-items: center; gap: 5px; }
.hello span { font-size: 11.500px; line-height: 17px; color: #8490a3; }
.wave { width: 13px; height: 13px; stroke: none; }
.quick { flex: none; height: 225px; padding: 8px 10px 0; display: flex; flex-direction: column; gap: 4.200px; border-bottom: 2px solid #253249; }
.quick button { height: 31px; border: 1px solid #25324a; border-radius: 10px; background: #0a111e; display: flex; align-items: center; gap: 9px; padding-left: 10px; font-size: 11.400px; font-weight: 500; color: #d3d9e3; }
.quick svg { width: 11px; height: 11px; fill: #8a8cf5; stroke: none; }
.quick svg.wide { width: 13px; margin: 0 -1px; }
.quick .line { fill: none; stroke: #7c7ee6; stroke-width: 1; }
.quick .cut { fill: none; stroke: #0a111e; stroke-width: 1.300; }
.today-box { flex: none; height: 200px; overflow: hidden; background: #1a1f33; }
.tb-head { height: 36px; padding: 0 12px; display: flex; align-items: center; justify-content: space-between; font-size: 10.700px; font-weight: 600; letter-spacing: .35px; color: #69738a; }
.tb-head em { height: 20px; border-radius: 10px; background: #312e7c; color: #a7b0fb; padding: 0 8.500px; font-size: 10.400px; font-style: normal; font-weight: 700; line-height: 20px; letter-spacing: 0; }
.counts { height: 12px; padding: 0 12px; display: flex; align-items: center; font-size: 10.900px; color: #8490a3; }
.counts b { margin: 0 5px 0 4px; color: #dfe4ec; }
.dot { width: 7px; height: 7px; border-radius: 50%; }
.counts .c-green, .counts .c-grey { margin-left: 6px; }
.c-blue { background: #3b82f6; } .c-green { background: #10b981; } .c-grey { background: #6b7280; }
.unassigned { height: 33px; padding: 7px 13px 0; border-bottom: 1px solid #262c44; display: flex; align-items: center; gap: 6px; font-size: 10.700px; font-weight: 700; letter-spacing: .3px; color: #ee6c6c; }
.unassigned svg { width: 10px; height: 10px; fill: #ee6c6c; stroke: none; }
.todo { height: 100px; padding: 7px 12px 0; border-bottom: 1px solid #262c44; display: flex; flex-direction: column; }
.todo-top { display: flex; height: 18px; align-items: center; }
.todo code { font-size: 10px; color: #818cf8; width: 41px; }
.time { height: 18px; padding: 0 5px; border-radius: 4px; background: #1c3556; color: #93c5fd; font-size: 11px; font-weight: 700; line-height: 17px; }
.need { margin-left: auto; height: 18px; padding: 0 5px; border-radius: 4px; background: #450a0f; color: #f59a9a; font-size: 10.100px; font-weight: 600; line-height: 19px; }
.todo strong { font-size: 11.400px; line-height: 18px; font-weight: 600; margin-top: 2px; color: #e3e7ee; }
.todo p { font-size: 10.450px; line-height: 16px; margin-top: 2px; color: #5b657a; }
.todo button { align-self: flex-end; width: 48px; height: 22px; margin-top: 5.500px; border-radius: 5px; background: #6366f1; font-size: 11px; font-weight: 700; flex: none; }
.chat-label { flex: none; height: 27px; padding: 0 11px 0 12px; border-top: 1px solid #262f47; border-bottom: 1px solid #262f47; background: #1a1f33; display: flex; align-items: center; gap: 7px; font-size: 10.100px; font-weight: 700; letter-spacing: .5px; color: #8490a3; }
.chat-label::after { content: ""; flex: 1; height: 1px; background: #262f47; }
.chat { flex: none; height: 118px; display: flex; flex-direction: column; align-items: center; padding-top: 23px; color: #8c96a6; }
.chat svg { width: 25px; height: 25px; color: #3b465a; }
.chat strong { margin-top: 7px; font-size: 12px; line-height: 18px; font-weight: 600; }
.chat span { margin-top: 5px; font-size: 11px; line-height: 18px; }
.ask { flex: none; height: 52px; padding: 8px 10px 0; border-top: 1px solid #262f47; background: #1d2432; display: flex; gap: 6px; }
.ask-in { width: 298px; height: 35px; border: 1px solid #2a3650; border-radius: 10px; background: #0a111e; padding-left: 10px; line-height: 32px; font-size: 12.450px; color: #707a8b; }
.send { width: 34px; height: 34px; border-radius: 10px; background: #8b5cf6; display: flex; align-items: center; justify-content: center; }
.send svg { width: 14px; height: 14px; fill: #fff; stroke: none; }
.note { flex: 1; border-top: 1px solid #262f47; background: #1a1f33; text-align: center; line-height: 25px; font-size: 10.100px; color: #8c96a6; }

.panel-head { height: 41px; padding: 3px 14px 0; border-bottom: 1px solid #233047; display: flex; align-items: center; justify-content: space-between; font-size: 11.200px; }
.panel-head h2 { font-size: 12.600px; font-weight: 700; letter-spacing: .4px; }
.online { display: flex; align-items: center; gap: 6px; color: #8490a3; }
.online i { width: 7px; height: 7px; border-radius: 50%; background: #8a94a8; }
.live { height: 314px; margin-top: 12px; }
.map { position: relative; width: 338px; height: 220px; margin: 10px; border-radius: 6px; overflow: hidden; }
.map > svg { width: 338px; height: 220px; display: block; }
.map-text text { stroke: #fff; stroke-width: 5; stroke-opacity: .75; paint-order: stroke; font-family: "Noto Sans", sans-serif; }
.zoomer { position: absolute; left: 12px; top: 12px; width: 30px; height: 60px; border-radius: 2px; background: #fff; box-shadow: 0 0 0 1px rgba(0, 0, 0, .3); color: #f97316; }
.zoomer span { display: block; height: 30px; text-align: center; font: bold 22px/32px "Liberation Mono", monospace; }
.zoomer span + span { border-top: 1px solid #ccc; line-height: 31px; }
.credit { position: absolute; right: 0; bottom: 0; width: 111px; height: 17px; padding-left: 5px; background: rgba(255, 255, 255, .85); color: #333; font: 12px/17px "Liberation Sans", sans-serif; white-space: nowrap; }
.credit svg { width: 12px; height: 8px; stroke: none; margin-right: 4px; }
.credit a { color: #f97316; }
.map-note { text-align: center; font-size: 11.100px; line-height: 24px; color: #8490a3; }
.drivers { height: 102px; margin-top: 12px; }
.drivers a { color: #ee7a24; font-size: 11.200px; }
.drivers p { text-align: center; line-height: 58px; font-size: 12.100px; color: #8490a3; }
```
